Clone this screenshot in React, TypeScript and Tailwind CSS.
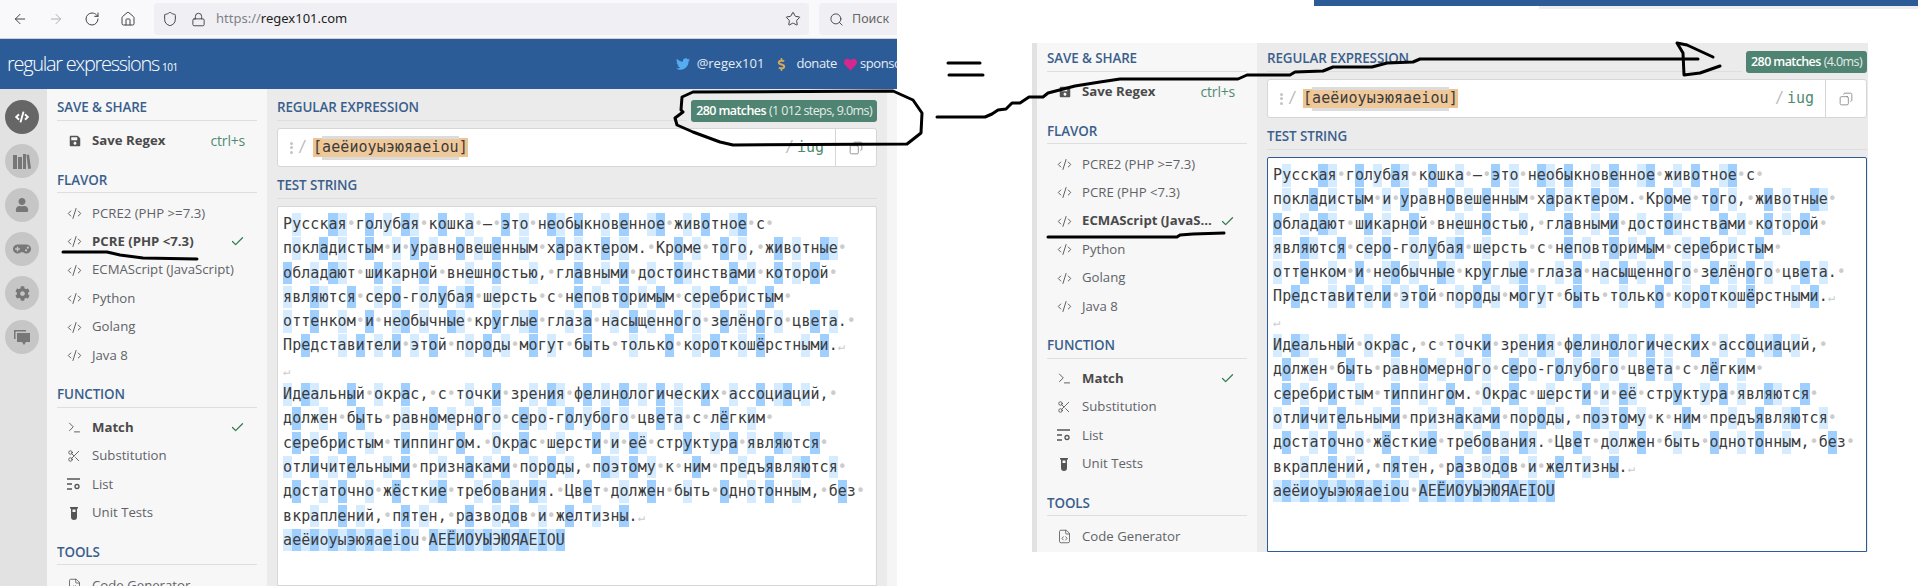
import type { ReactNode } from 'react';
import { ArrowLeft, ArrowRight, Check, CodeXml, Copy, FileCode, Home, Lock, RotateCw, Scissors, Search, Shield, Star, Terminal } from 'lucide-react';
import { FaCode, FaCog, FaDollarSign, FaGamepad, FaHeart, FaSave, FaTwitter, FaUser } from 'react-icons/fa';

const textLines = [
  'Русская голубая кошка — это необыкновенное животное с ',
  'покладистым и уравновешенным характером. Кроме того, животные ',
  'обладают шикарной внешностью, главными достоинствами которой ',
  'являются серо-голубая шерсть с неповторимым серебристым ',
  'оттенком и необычные круглые глаза насыщенного зелёного цвета. ',
  'Представители этой породы могут быть только короткошёрстными.↵',
  '↵',
  'Идеальный окрас, с точки зрения фелинологических ассоциаций, ',
  'должен быть равномерного серо-голубого цвета с лёгким ',
  'серебристым типпингом. Окрас шерсти и её структура являются ',
  'отличительными признаками породы, поэтому к ним предъявляются ',
  'достаточно жёсткие требования. Цвет должен быть однотонным, без ',
  'вкраплений, пятен, разводов и желтизны.↵',
  'аеёиоуыэюяaeiou АЕЁИОУЫЭЮЯAEIOU',
];

const vowels = 'аеёиоуыэюяaeiou';

function ListIcon() {
  return (
    <svg width="14" height="13" viewBox="0 0 14 13" fill="none" stroke="#555" strokeWidth="1.3">
      <path d="M0 1h13M0 6h5M0 11h5" />
      <circle cx="10" cy="8.5" r="2" />
    </svg>
  );
}

function TubeIcon() {
  return (
    <svg width="8" height="13" viewBox="0 0 8 13" fill="#555">
      <path d="M0 0h8v1.500H7V10a3 3 0 0 1-6 0V1.500H0z" />
      <rect x="2.500" y="2.500" width="3" height="2.500" fill="#f7f7f7" />
    </svg>
  );
}

function BooksIcon() {
  return (
    <svg width="18" height="15" viewBox="0 0 18 15" fill="#777">
      <rect x="0" y="1" width="4" height="14" />
      <rect x="5" y="3" width="4" height="12" />
      <rect x="10" y="0" width="3" height="15" />
      <path d="M13.500 1l2.500-.5 2 14-2.800.5z" />
    </svg>
  );
}

function ForumIcon() {
  return (
    <svg width="16" height="15" viewBox="0 0 16 15" fill="#777">
      <path d="M0 0h12v1.500H1.500V9H0z" />
      <path d="M3 3h13v9h-4l-2 3-2-3H3z" />
    </svg>
  );
}

function RailButton({ active, children }: { active?: boolean; children: ReactNode }) {
  return (
    <div className={`flex h-[34px] w-[34px] items-center justify-center rounded-full ${active ? 'bg-[#666666]' : 'bg-[#c6c6c6]'}`}>
      {children}
    </div>
  );
}

function Heading({ children }: { children: ReactNode }) {
  return (
    <div className="flex h-[25px] flex-1 items-center border-b border-[#dedede] pb-[1px] text-[13.4px] font-semibold uppercase tracking-[-0.1px] text-[#3b5f8c]">
      {children}
    </div>
  );
}

function Item({ icon, label, active, side, labelClass }: { icon: ReactNode; label: string; active?: boolean; side?: ReactNode; labelClass?: string }) {
  return (
    <div className="flex h-[28.4px] items-center pl-[10px] pr-[12px] text-[13.2px]">
      <span className="flex w-[25px] shrink-0 items-center">{icon}</span>
      <span className={`${active ? 'font-bold text-[#4a4a4a]' : 'text-[#5f6368]'} ${labelClass ?? ''}`}>{label}</span>
      {side && <span className="ml-auto">{side}</span>}
    </div>
  );
}

function Sidebar({ topPad, flavor }: { topPad: string; flavor: number }) {
  const code = <CodeXml size={15} strokeWidth={1.5} color="#555" />;
  const tick = <Check size={15} strokeWidth={2} color="#2f7d4f" />;
  const flavors = ['PCRE2 (PHP >=7.3)', 'PCRE (PHP <7.3)', 'ECMAScript (JavaScript)', 'Python', 'Golang', 'Java 8'];
  return (
    <div className={`w-[220px] shrink-0 overflow-hidden bg-[#f7f7f7] px-[10px] ${topPad}`}>
      <Heading>Save &amp; Share</Heading>
      <div className="mb-[13px] mt-[6px]">
        <Item
          icon={<FaSave size={12} color="#555" className="ml-[2px]" />}
          label="Save Regex"
          active
          side={<span className="text-[14px] tracking-[-0.2px] text-[#4f8a72]">ctrl+s</span>}
        />
      </div>
      <Heading>Flavor</Heading>
      <div className="mb-[13px] mt-[6px]">
        {flavors.map((f, i) => (
          <Item
            key={f}
            icon={code}
            label={f}
            active={i === flavor}
            side={i === flavor ? tick : undefined}
            labelClass={i === flavor && i === 2 ? 'w-[131px] truncate' : ''}
          />
        ))}
      </div>
      <Heading>Function</Heading>
      <div className="mb-[13px] mt-[6px]">
        <Item icon={<Terminal size={15} strokeWidth={1.5} color="#555" />} label="Match" active side={tick} />
        <Item icon={<Scissors size={14} strokeWidth={1.5} color="#555" />} label="Substitution" />
        <Item icon={<ListIcon />} label="List" />
        <Item icon={<span className="ml-[3px] flex"><TubeIcon /></span>} label="Unit Tests" />
      </div>
      <Heading>Tools</Heading>
      <div className="mt-[6px]">
        <Item icon={<FileCode size={15} strokeWidth={1.3} color="#555" />} label="Code Generator" />
      </div>
    </div>
  );
}

function TestText() {
  let n = 0;
  return (
    <div className="font-['DejaVu_Sans_Mono',monospace] text-[15px] text-[#3c3c3c]">
      {textLines.map((line, i) => (
        <div key={i} className="h-[24.3px] whitespace-pre">
          {Array.from(line).map((ch, j) => {
            let bg = '';
            if (vowels.includes(ch.toLowerCase())) {
              bg = n % 2 === 0 ? 'bg-[#d5ebff]' : 'bg-[#9fcfff]';
              n++;
            }
            if (ch === ' ') {
              return <span key={j} className="inline-block h-[22.5px] w-[9.1px] text-center align-top leading-[22.5px] text-[#cccccc]">•</span>;
            }
            if (ch === '↵') {
              return <span key={j} className="inline-block h-[22.5px] w-[9.1px] align-top text-[12px] leading-[24px] text-[#cccccc]">↵</span>;
            }
            return <span key={j} className={`inline-block h-[22.5px] w-[9.1px] text-center align-top leading-[22.5px] ${bg}`}>{ch}</span>;
          })}
        </div>
      ))}
    </div>
  );
}

function Main({ pad, badge, focused }: { pad: string; badge: ReactNode; focused?: boolean }) {
  return (
    <div className={`flex min-w-0 flex-1 flex-col bg-[#ebebeb] pl-[10px] ${pad}`}>
      <div className="flex h-[25px] items-start">
        <Heading>Regular Expression</Heading>
        <div className="ml-[4px] mt-[4px] flex h-[22px] items-center rounded-[3px] bg-[#4f8472] px-[5px] text-[12.5px] tracking-[-0.6px] text-white">
          {badge}
        </div>
      </div>
      <div className="mt-[7px] flex h-[39px] items-center rounded-[3px] border border-[#d6d6d6] bg-white font-['DejaVu_Sans_Mono',monospace] text-[15px] text-[#3c3c3c]">
        <span className="ml-[12px] flex w-[3px] flex-col gap-[1.500px]">
          <i className="h-[3px] w-[3px] rounded-full bg-[#c4c4c4]" />
          <i className="h-[3px] w-[3px] rounded-full bg-[#c4c4c4]" />
          <i className="h-[3px] w-[3px] rounded-full bg-[#c4c4c4]" />
        </span>
        <span className="ml-[5px] w-[15px] text-[#bbbbbb]">/</span>
        <span className="flex h-[19px] items-center bg-[#eec491] leading-[19px]">
          <span className="w-[9.1px] text-center">[</span>
          <span className="flex h-[24px] items-center border-y-[3px] border-[#dcdcdc] bg-[#f0c99b] tracking-[0.07px]">аеёиоуыэюяaeiou</span>
          <span className="w-[9.1px] text-center">]</span>
        </span>
        <span className="ml-auto mr-[11px]">
          <span className="mr-[3px] text-[#bbbbbb]">/</span>
          <span className="text-[#4f8a72]">iug</span>
        </span>
        <span className="flex h-full w-[41px] items-center justify-center border-l border-[#d6d6d6]">
          <Copy size={14} strokeWidth={1.3} color="#777" className="-scale-x-100" />
        </span>
      </div>
      <div className="mt-[7px] flex">
        <Heading>Test String</Heading>
      </div>
      <div className={`mt-[7px] flex-1 rounded-t-[2px] border bg-white pl-[5px] pt-[6px] ${focused ? 'border-[#2c5c97]' : 'border-[#d6d6d6]'}`}>
        <TestText />
      </div>
    </div>
  );
}

function Browser() {
  return (
    <div className="flex h-[39px] items-center border-b border-[#cfcfd4] bg-[#f9f9fb] text-[#5b5b66]">
      <div className="flex w-[154px] shrink-0 items-center gap-[20px] pl-[12px]">
        <ArrowLeft size={16} strokeWidth={1.5} color="#444" />
        <ArrowRight size={16} strokeWidth={1.5} color="#b0b0b6" />
        <RotateCw size={16} strokeWidth={1.5} color="#444" />
        <Home size={16} strokeWidth={1.5} color="#444" />
      </div>
      <div className="flex h-[32px] w-[655px] items-center rounded-[4px] bg-[#f0f0f4] pl-[8px] pr-[8px]">
        <Shield size={16} strokeWidth={1.5} color="#444" />
        <Lock size={15} strokeWidth={1.5} color="#444" className="ml-[13px]" />
        <span className="ml-[10px] font-['Noto_Sans',sans-serif] text-[13px] text-[#222]">
          <span className="text-[#80808a]">https://</span>regex101.com
        </span>
        <Star size={16} strokeWidth={1.5} color="#444" className="ml-auto" />
      </div>
      <div className="ml-[10px] flex h-[32px] flex-1 items-center gap-[8px] rounded-l-[4px] bg-[#f0f0f4] pl-[10px] font-['Noto_Sans',sans-serif] text-[12.5px] text-[#666]">
        <Search size={15} strokeWidth={1.5} color="#444" />
        Поиск
      </div>
    </div>
  );
}

function Header() {
  return (
    <div className="flex h-[50px] items-center overflow-hidden whitespace-nowrap bg-[#2c5c97] pl-[7px] text-white">
      <span className="text-[20px] font-light tracking-[-1.3px]">regular expressions</span>
      <span className="ml-[3px] mt-[6px] text-[10px] tracking-[-0.5px]">101</span>
      <div className="ml-[498px] flex items-center text-[13px] tracking-[-0.4px] text-[#e4ecf5]">
        <FaTwitter size={14} color="#55acee" />
        <span className="ml-[7px] tracking-normal">@regex101</span>
        <FaDollarSign size={13} color="#d2a75f" className="ml-[11px]" />
        <span className="ml-[8px]">donate</span>
        <FaHeart size={13} color="#d8268f" className="ml-[7px]" />
        <span className="ml-[3px]">sponsor</span>
      </div>
    </div>
  );
}

function Rail() {
  return (
    <div className="flex w-[47px] shrink-0 flex-col gap-[10px] bg-[#e2e2e2] pl-[5px] pt-[11px]">
      <RailButton active><FaCode size={14} color="#fff" /></RailButton>
      <RailButton><BooksIcon /></RailButton>
      <RailButton><FaUser size={14} color="#777" /></RailButton>
      <RailButton><FaGamepad size={18} color="#777" /></RailButton>
      <RailButton><FaCog size={15} color="#777" /></RailButton>
      <RailButton><ForumIcon /></RailButton>
    </div>
  );
}

function Scribbles() {
  const ink = { fill: 'none', stroke: '#000', strokeWidth: 3, strokeLinejoin: 'round' as const, strokeLinecap: 'round' as const };
  return (
    <svg className="pointer-events-none absolute left-0 top-0" width="1918" height="586" viewBox="0 0 1918 586">
      <path {...ink} d="M683 112L681 110L682 97L693 92L893 91L913 100L922 113L921 133L907 144L733 145L720 142L693 132L677 125L675 118L683 112" />
      <path {...ink} d="M948 63H980M949 75H983" />
      <path {...ink} d="M937 117H985L992 114L998 110L1006 109L1012 103L1020 103L1029 97L1043 97L1048 93L1075 86L1100 82L1120 79H1238L1247 75H1290L1295 72L1323 71L1333 67H1372L1387 63L1413 62L1420 59H1698" />
      <path {...ink} d="M1677 43L1687 45L1713 57M1677 43L1683 53L1684 75L1700 73L1720 66" />
      <path {...ink} d="M63 252H107L120 255L143 258L197 259" />
      <path {...ink} d="M1048 237H1177L1180 235L1193 234L1224 233" />
    </svg>
  );
}

export default function App() {
  return (
    <div className="relative flex h-[586px] w-[1918px] overflow-hidden bg-white font-['Open_Sans',sans-serif]">
      {/* left screenshot */}
      <div className="flex w-[897px] shrink-0 flex-col">
        <Browser />
        <Header />
        <div className="flex min-h-0 flex-1 bg-[#f5f5f5] pr-[10px]">
          <Rail />
          <Sidebar topPad="pt-[7px]" flavor={1} />
          <Main
            pad="pr-[10px] pt-[7px]"
            badge={<><span className="font-semibold">280 matches</span><span className="ml-[3px] opacity-85">(1 012 steps, 9.0ms)</span></>}
          />
        </div>
      </div>
      {/* right screenshot */}
      <div className="flex min-w-0 flex-1 flex-col">
        <div className="ml-[417px]">
          <div className="h-[6px] bg-[#2c5c97]" />
          <div className="flex h-[3px]">
            <div className="w-[225px] bg-white" />
            <div className="flex-1 bg-[#eeeeee]" />
          </div>
        </div>
        <div className="ml-[135px] mt-[34px] flex h-[509px] w-[836px]">
          <div className="w-[5px] shrink-0 bg-[#e2e2e2]" />
          <Sidebar topPad="pt-[4px]" flavor={2} />
          <Main
            pad="pr-[1px] pt-[4px]"
            focused
            badge={<><span className="font-semibold">280 matches</span><span className="ml-[3px] opacity-85">(4.0ms)</span></>}
          />
        </div>
      </div>
      <Scribbles />
    </div>
  );
}
